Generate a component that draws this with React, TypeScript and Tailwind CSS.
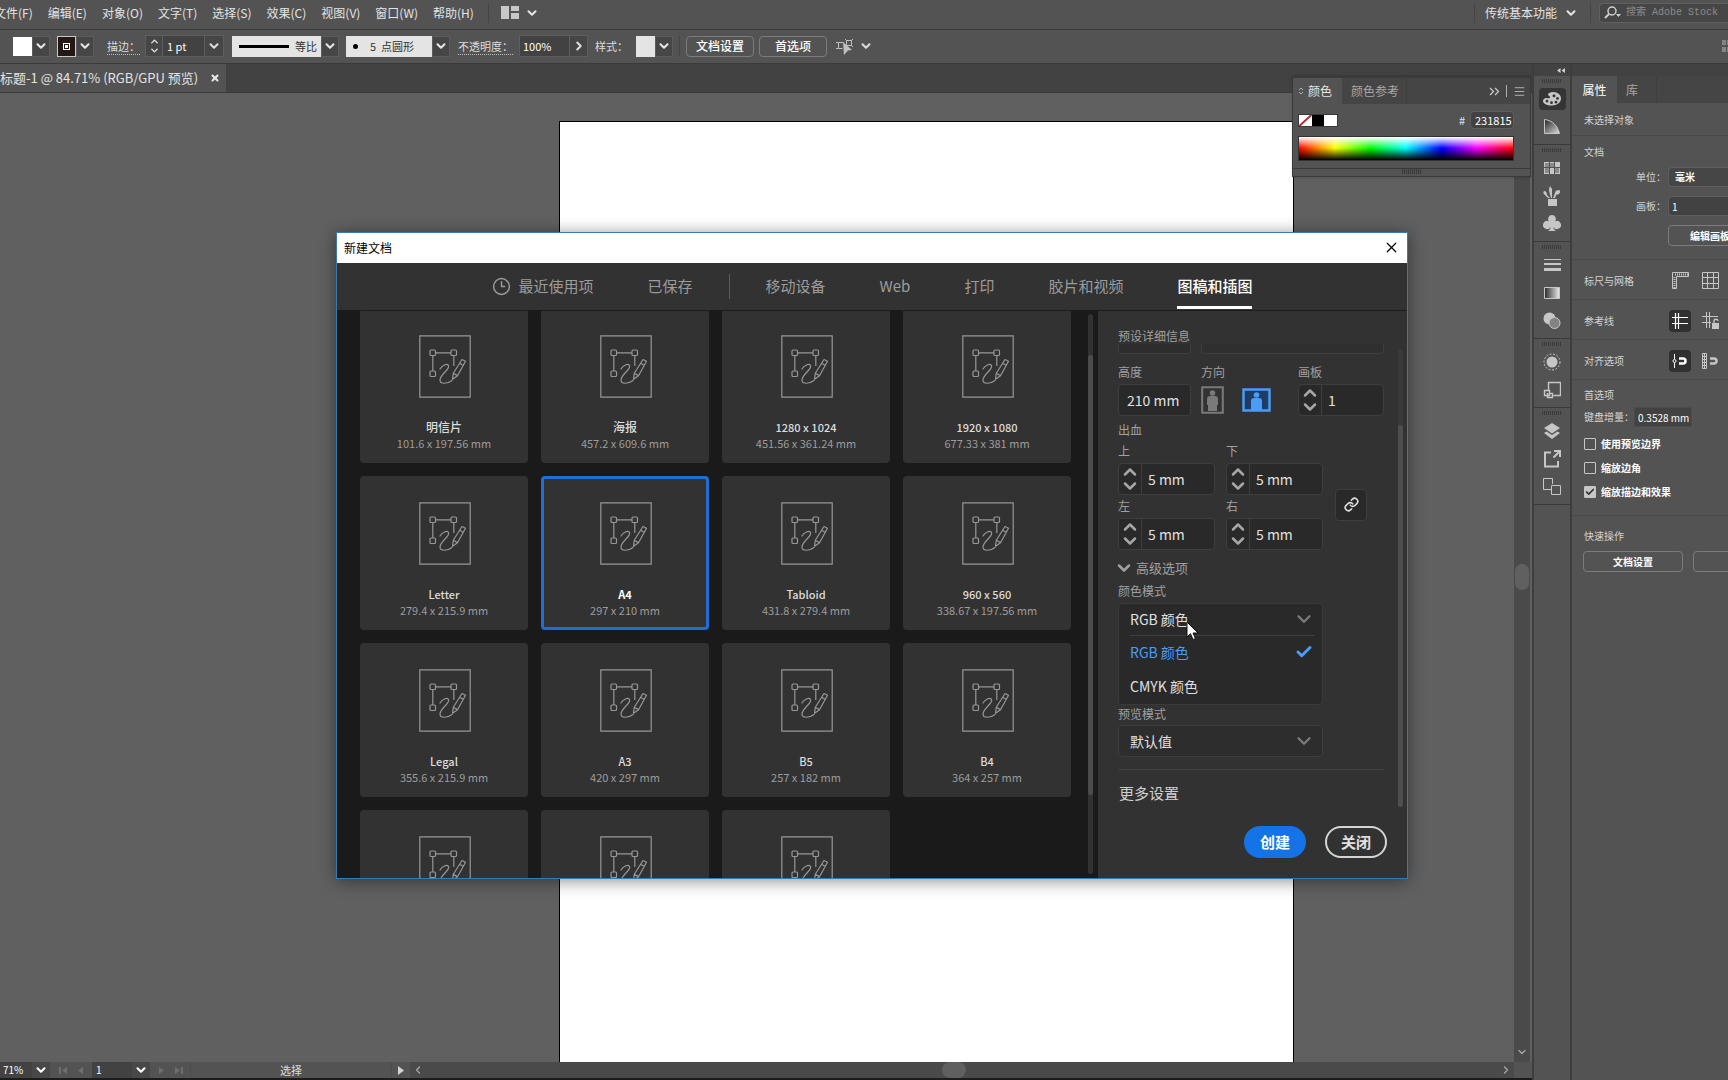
import { ReactNode, useState } from 'react';
import { Check, ChevronDown, ChevronLeft, ChevronRight, ChevronUp, Clock3, Link, Menu, X } from 'lucide-react';

const MENUS = ['文件(F)', '编辑(E)', '对象(O)', '文字(T)', '选择(S)', '效果(C)', '视图(V)', '窗口(W)', '帮助(H)'];

const PRESETS = [
  { id: 'postcard', name: '明信片', size: '101.6 x 197.56 mm' },
  { id: 'poster', name: '海报', size: '457.2 x 609.6 mm' },
  { id: '1280', name: '1280 x 1024', size: '451.56 x 361.24 mm' },
  { id: '1920', name: '1920 x 1080', size: '677.33 x 381 mm' },
  { id: 'letter', name: 'Letter', size: '279.4 x 215.9 mm' },
  { id: 'a4', name: 'A4', size: '297 x 210 mm' },
  { id: 'tabloid', name: 'Tabloid', size: '431.8 x 279.4 mm' },
  { id: '960', name: '960 x 560', size: '338.67 x 197.56 mm' },
  { id: 'legal', name: 'Legal', size: '355.6 x 215.9 mm' },
  { id: 'a3', name: 'A3', size: '420 x 297 mm' },
  { id: 'b5', name: 'B5', size: '257 x 182 mm' },
  { id: 'b4', name: 'B4', size: '364 x 257 mm' },
  { id: 'custom1' },
  { id: 'custom2' },
  { id: 'custom3' },
];

const Caret = () => <ChevronDown size={14} strokeWidth={3.5} />;

function DropButton({ label }: { label: string }) {
  return (
    <button aria-label={label} className="w-[18px] h-[21px] shrink-0 flex items-center justify-center bg-[#464646] border border-[#5c5c5c] text-[#e6e6e6]">
      <Caret />
    </button>
  );
}

function Divider() {
  return <span className="block w-px h-5 bg-[#454545] shrink-0" />;
}

/* ---------- top bars ---------- */

function MenuBar() {
  return (
    <header className="h-[30px] shrink-0 flex items-center bg-[#535353] border-b border-[#3a3a3a] text-xs text-[#e4e4e4] overflow-hidden">
      <nav className="flex items-center gap-[15px] -ml-[6px] pb-1 whitespace-nowrap">
        {MENUS.map(m => <button key={m}>{m}</button>)}
      </nav>
      <div className="flex items-center gap-2 pb-1 ml-[14px]">
        <Divider />
        <button aria-label="排列文档" className="flex items-center gap-[6px] ml-1">
          <svg width="18" height="13" viewBox="0 0 18 13" fill="#c8c8c8">
            <path d="M0 0h8v13H0zM10 0h8v5h-8zM10 7h8v6h-8z" />
          </svg>
          <Caret />
        </button>
      </div>
      <div className="ml-auto flex items-center pb-1">
        <Divider />
        <button className="flex items-center gap-[7px] ml-[10px] mr-3">
          传统基本功能 <Caret />
        </button>
        <Divider />
        <label className="ml-2 w-[129px] h-5 flex items-center gap-1 pl-1 bg-[#464646] border border-[#606060] border-r-0 rounded-l-sm">
          <svg className="shrink-0" width="18" height="13" viewBox="0 0 18 13" fill="none" stroke="#d0d0d0" strokeWidth="1.5">
            <circle cx="8" cy="5" r="4" />
            <path d="M5 8 1 12" strokeWidth="2" />
            <path d="m12 8 5 0-2.500 3z" fill="#d0d0d0" stroke="none" />
          </svg>
          <input
            aria-label="搜索 Adobe Stock"
            placeholder="搜索 Adobe Stock"
            className="w-full min-w-0 bg-transparent outline-none text-[10px] placeholder:text-[#8c8c8c] font-['Liberation_Mono','Noto_Sans_CJK_SC',monospace]"
          />
        </label>
      </div>
    </header>
  );
}

function OptionsBar() {
  return (
    <div className="h-[34px] shrink-0 flex items-center bg-[#535353] border-b border-[#3a3a3a] text-[11px] text-[#dcdcdc] whitespace-nowrap pl-[13px] pb-px">
      <button aria-label="填色" className="w-[19px] h-[19px] bg-white" />
      <DropButton label="填色选项" />
      <button aria-label="描边颜色" className="ml-[7px] w-[19px] h-[21px] bg-[#231815] border border-[#c8c8c8] flex items-center justify-center">
        <span className="w-[7px] h-[7px] border border-white flex items-center justify-center">
          <span className="w-[3px] h-[3px] bg-white" />
        </span>
      </button>
      <DropButton label="描边选项" />
      <label htmlFor="stroke" className="ml-[13px] border-b border-dotted border-[#c0c0c0] leading-4">描边：</label>
      <div className="ml-[5px] flex h-[22px] border border-[#5e5e5e] bg-[#464646]">
        <span className="w-4 flex flex-col items-center justify-center text-[#e6e6e6]">
          <ChevronUp size={13} strokeWidth={3} className="-mb-[2px]" />
          <ChevronDown size={13} strokeWidth={3} />
        </span>
        <input id="stroke" defaultValue="1 pt" className="w-[42px] pl-1 border-l border-[#5e5e5e] bg-[#424242] text-white outline-none" />
        <button aria-label="描边粗细" className="w-[19px] flex items-center justify-center border-l border-[#5e5e5e]"><Caret /></button>
      </div>
      <button className="ml-2 w-[89px] h-[21px] flex items-center justify-end gap-[6px] pr-1 bg-[#e4e4e4] text-[#333]">
        <span className="w-[50px] h-[3px] bg-black" />等比
      </button>
      <DropButton label="变量宽度" />
      <button className="ml-[7px] w-[86px] h-[21px] flex items-center gap-3 pl-[7px] bg-[#e4e4e4] text-[#333]">
        <span className="w-[5px] h-[5px] rounded-full bg-black" />5&nbsp; 点圆形
      </button>
      <DropButton label="画笔定义" />
      <label htmlFor="opacity" className="ml-2 border-b border-dotted border-[#c0c0c0] leading-4">不透明度：</label>
      <div className="ml-[6px] flex h-[22px] border border-[#5e5e5e] bg-[#464646]">
        <input id="opacity" defaultValue="100%" className="w-[49px] pl-[3px] bg-[#424242] text-white outline-none" />
        <button aria-label="不透明度选项" className="w-[18px] flex items-center justify-center border-l border-[#5e5e5e]">
          <ChevronRight size={14} strokeWidth={3.5} />
        </button>
      </div>
      <span className="ml-[7px]">样式：</span>
      <button aria-label="图形样式" className="ml-2 w-[19px] h-[21px] bg-[#e4e4e4]" />
      <DropButton label="样式选项" />
      <span className="mx-[6px]"><Divider /></span>
      <button className="w-[68px] h-[21px] rounded-sm border border-[#7c7c7c] text-xs font-medium text-white">文档设置</button>
      <button className="ml-[5px] w-[68px] h-[21px] rounded-sm border border-[#7c7c7c] text-xs font-medium text-white">首选项</button>
      <button aria-label="选择类似的对象" className="ml-[9px] flex items-center gap-[5px]">
        <svg width="18" height="18" viewBox="0 0 18 18" fill="none" stroke="#c0c0c0">
          <path d="M7.500 5.500H2.500v6h4M0 5.500h2M0 11.500h2M10.500 3.500h5v5h-5zM9 2l2 2M17 2l-2 2M17 10l-2-2" />
          <path d="m7 5 9 8-4 .5L8 18z" fill="#c0c0c0" stroke="none" />
        </svg>
        <Caret />
      </button>
      <svg className="ml-auto" width="6" height="14" viewBox="0 0 6 14" fill="#858585">
        <path d="M0 1h4v5H0zM5 1h1v5H5zM0 8h4v5H0zM5 8h1v5H5z" />
      </svg>
    </div>
  );
}

/* ---------- workspace ---------- */

function ColorPanel() {
  return (
    <section className="absolute right-px top-[11px] w-[239px] bg-[#535353] border-t-[3px] border-x border-[#3a3a3a] text-xs text-[#e6e6e6] shadow">
      <div className="h-[26px] flex items-stretch bg-[#454545]">
        <button className="w-[49px] flex items-center gap-1 pl-[5px] bg-[#535353]">
          <svg width="6" height="10" viewBox="0 0 6 10" fill="none" stroke="#b0b0b0"><path d="m1 4 2-2 2 2M1 6l2 2 2-2" /></svg>
          颜色
        </button>
        <button className="w-[65px] pl-[9px] text-left text-[#a8a8a8] border-r border-[#3f3f3f]">颜色参考</button>
        <div className="ml-auto mr-1 flex items-center gap-[6px] text-[#c8c8c8]">
          <svg width="11" height="9" viewBox="0 0 11 9" fill="none" stroke="currentColor" strokeWidth="1.300"><path d="m1 1 3.500 3.500L1 8M6 1l3.500 3.500L6 8" /></svg>
          <span className="w-px h-3 bg-[#b0b0b0]" />
          <Menu size={13} strokeWidth={1.5} />
        </div>
      </div>
      <div className="flex items-center py-[7px] px-[5px]">
        <span className="flex w-10 h-[13px] border border-[#3a3a3a]">
          <svg className="flex-1 bg-white" viewBox="0 0 13 12" stroke="#b3262a" strokeWidth="2"><path d="M0 12 13 0" /></svg>
          <span className="flex-1 bg-black" />
          <span className="flex-1 bg-white" />
        </span>
        <label className="ml-auto mr-[11px] flex items-center gap-[5px] text-[11px]">
          #
          <input defaultValue="231815" className="w-11 h-[18px] pl-1 bg-[#424242] border border-[#5e5e5e] rounded-sm text-white text-[11px] outline-none" />
        </label>
      </div>
      <div className="ml-[5px] mr-4 h-[25px] border border-[#333] bg-[linear-gradient(to_bottom,#ffffff_0%,transparent_48%,#000000_100%),linear-gradient(to_right,#f00,#ff0,#0f0,#0ff,#00f,#f0f,#f00)]" />
      <div className="mt-[7px] h-[9px] flex justify-center border-y border-[#3a3a3a]">
        <span className="w-5 h-[5px] bg-[repeating-linear-gradient(to_right,#3a3a3a_0px,#3a3a3a_1px,transparent_1px,transparent_2px)]" />
      </div>
    </section>
  );
}

function StatusBar() {
  return (
    <footer className="h-[18px] shrink-0 flex items-stretch bg-[#535353] border-b-2 border-[#1c1c1c] text-[10px] leading-4 text-white">
      <input aria-label="缩放" defaultValue="71%" className="w-8 pl-[3px] bg-[#424242] outline-none" />
      <button aria-label="缩放级别" className="w-[18px] flex items-center justify-center bg-[#484848]"><Caret /></button>
      <div className="w-[42px] flex items-center justify-center gap-[10px]">
        <svg width="9" height="9" viewBox="0 0 9 9" fill="#6e6e6e"><path d="M0 1h2v7H0zM8 1v7L3 4.500z" /></svg>
        <svg width="6" height="9" viewBox="0 0 6 9" fill="#6e6e6e"><path d="M5 1v7L0 4.500z" /></svg>
      </div>
      <input aria-label="画板导航" defaultValue="1" className="w-10 pl-1 bg-[#424242] outline-none" />
      <button aria-label="画板列表" className="w-[18px] flex items-center justify-center bg-[#484848]"><Caret /></button>
      <div className="w-10 flex items-center justify-center gap-[10px]">
        <svg width="6" height="9" viewBox="0 0 6 9" fill="#6e6e6e"><path d="M1 1v7l5-3.500z" /></svg>
        <svg width="9" height="9" viewBox="0 0 9 9" fill="#6e6e6e"><path d="M7 1h2v7H7zM1 1v7l5-3.500z" /></svg>
      </div>
      <span className="w-[202px] text-center text-[#dcdcdc] text-[11px] border-x border-[#4c4c4c]">选择</span>
      <button aria-label="状态选项" className="w-[18px] flex items-center justify-center">
        <svg width="6" height="9" viewBox="0 0 6 9" fill="#d4d4d4"><path d="M0 0v9l6-4.500z" /></svg>
      </button>
      <div className="flex-1 flex items-center justify-between bg-[#4a4a4a] text-[#a8a8a8] px-[2px]">
        <ChevronLeft size={12} strokeWidth={2.5} />
        <span className="w-6 h-4 rounded-full bg-[#606060] mr-4" />
        <ChevronRight size={12} strokeWidth={2.5} />
      </div>
      <span className="w-[18px]" />
    </footer>
  );
}

function Workspace() {
  return (
    <main className="relative flex-1 min-w-0 flex flex-col">
      <div className="h-[29px] shrink-0 flex bg-[#424242] border-b border-[#3a3a3a]">
        <div className="w-[226px] flex items-center justify-between pr-1 bg-[#535353] text-[13px] text-[#e4e4e4] whitespace-nowrap">
          标题-1 @ 84.71% (RGB/GPU 预览)
          <button aria-label="关闭文档" className="px-[2px]"><X size={10} strokeWidth={5} /></button>
        </div>
      </div>
      <div className="flex-1 min-h-0 flex bg-[#606060]">
        <div className="relative flex-1 overflow-hidden">
          <div className="absolute left-[559px] top-7 -bottom-px w-[735px] bg-white border border-black" />
        </div>
        <div className="w-4 mr-[2px] flex flex-col items-center justify-end bg-[#4a4a4a] text-[#a8a8a8]">
          <span className="w-[14px] h-[26px] rounded-full bg-[#606060]" />
          <span className="h-[456px]" />
          <ChevronDown size={12} strokeWidth={2.5} className="mb-1" />
        </div>
      </div>
      <StatusBar />
      <ColorPanel />
    </main>
  );
}

/* ---------- icon dock ---------- */

function DockIcon({ label, active, children }: { label: string; active?: boolean; children: ReactNode }) {
  return (
    <button
      aria-label={label}
      className={active
        ? 'w-[27px] h-[22px] my-[3px] flex items-center justify-center bg-[#353535] rounded-sm'
        : 'w-[27px] h-[28px] flex items-center justify-center'}
    >
      <svg width="18" height="20" viewBox="0 0 18 20" fill="#c6c6c6">{children}</svg>
    </button>
  );
}

function DockGroup({ children }: { children: ReactNode }) {
  return (
    <div className="flex flex-col items-center pb-[3px] border-b border-[#3a3a3a]">
      <span className="w-5 h-1 mt-[3px] mb-[2px] bg-[repeating-linear-gradient(to_right,#3a3a3a_0px,#3a3a3a_1px,transparent_1px,transparent_2px)]" />
      {children}
    </div>
  );
}

function Dock() {
  return (
    <aside className="w-10 shrink-0 flex flex-col bg-[#535353] border-x-2 border-[#3e3e3e]">
      <div className="h-3 shrink-0 flex items-center justify-end pr-[5px] bg-[#424242]">
        <svg width="8" height="5" viewBox="0 0 8 5" fill="#d0d0d0"><path d="M3.500 0v5L0 2.500zM8 0v5L4.500 2.500z" /></svg>
      </div>
      <DockGroup>
        <DockIcon label="颜色" active>
          <path fillRule="evenodd" d="M10 3c5 0 8 3 8 6.500 0 4-4 7-9 7-5.500 0-9-2-9-4.500 0-2 2-3.500 4-3 2 .5 3 .5 3-1S5 7 5 5.500 7.500 3 10 3zm1 2.200a1.500 1.500 0 1 0 0 3 1.500 1.500 0 0 0 0-3zM14.500 8a1.400 1.400 0 1 0 0 2.800 1.400 1.400 0 0 0 0-2.800zM13 11.800a1.400 1.400 0 1 0 0 2.800 1.400 1.400 0 0 0 0-2.800zm-4.500.5a1.400 1.400 0 1 0 0 2.800 1.400 1.400 0 0 0 0-2.800zM4 10.800a1.400 1.400 0 1 0 0 2.800 1.400 1.400 0 0 0 0-2.800z" />
        </DockIcon>
        <DockIcon label="颜色参考">
          <defs>
            <linearGradient id="guide" x1="0" y1="0" x2="1" y2="1"><stop offset="0" stopColor="#222" /><stop offset="1" stopColor="#ddd" /></linearGradient>
          </defs>
          <path d="M1.500 2.500c8 1 13 6 15 14h-15z" fill="url(#guide)" stroke="#c6c6c6" />
        </DockIcon>
      </DockGroup>
      <DockGroup>
        <DockIcon label="色板">
          <path d="M1 4h16v12H1z" />
          <path d="M2 5h4v4H2zM7 5h4v4H7zM2 10h4v5H2zM12 10h4v5h-4z" fill="#8a8a8a" />
          <path d="M1 9.500h16M6.500 4v12M11.500 4v12" stroke="#535353" />
        </DockIcon>
        <DockIcon label="画笔">
          <path d="M5 13h9v7H5zM8 12C7 8 6 6 6 3l1-3 2 3v9zM5 12 2 9C0 8 0 6 1 5c2 0 3 2 3 4l3 3zM10 12l2-5c0-2 2-3 4-3 2 1 1 3 0 4l-3 1-1 3z" />
        </DockIcon>
        <DockIcon label="符号">
          <path d="M9 1a4 4 0 0 1 3 6.500A4 4 0 1 1 10.500 13c0 2 1 3 2.500 4H5c1.500-1 2.500-2 2.500-4A4 4 0 1 1 6 7.500 4 4 0 0 1 9 1z" />
        </DockIcon>
      </DockGroup>
      <DockGroup>
        <DockIcon label="描边"><path d="M1 4h17v1H1zM1 8h17v2H1zM1 13h17v3H1z" /></DockIcon>
        <DockIcon label="渐变">
          <defs><linearGradient id="grad"><stop offset="0" stopColor="#2a2a2a" /><stop offset="1" stopColor="#eee" /></linearGradient></defs>
          <path d="M1.500 4.500h15v11h-15z" fill="url(#grad)" stroke="#c6c6c6" />
        </DockIcon>
        <DockIcon label="透明度">
          <circle cx="6.500" cy="7.500" r="6" />
          <circle cx="11.500" cy="12" r="5.500" fill="#828282" stroke="#c6c6c6" />
        </DockIcon>
      </DockGroup>
      <DockGroup>
        <DockIcon label="外观">
          <circle cx="9" cy="10" r="5.500" />
          <circle cx="9" cy="10" r="8" fill="none" stroke="#c6c6c6" strokeDasharray="2 1.500" />
        </DockIcon>
        <DockIcon label="图形样式">
          <path d="M5.500 10V2.500h12v13h-7M1.500 10.500h5v5h-5zM4.500 13v4.500h5v-4H7" fill="none" stroke="#c6c6c6" strokeWidth="1.400" />
        </DockIcon>
      </DockGroup>
      <DockGroup>
        <DockIcon label="图层">
          <path d="m9 2 8 5-8 5.500L1 7z" />
          <path d="m1 12 2.500-1.500L9 14l5.500-3.500L17 12l-8 6z" />
        </DockIcon>
        <DockIcon label="资源导出">
          <path d="M8 3.500H2v14h13V12M17 8V2h-6M17 2l-6.500 6.500" fill="none" stroke="#c6c6c6" strokeWidth="2" />
        </DockIcon>
        <DockIcon label="画板">
          <path d="M8 12.500H.5V1.500h9V7M8.500 8.500h9v9h-9z" fill="none" stroke="#c6c6c6" />
        </DockIcon>
      </DockGroup>
    </aside>
  );
}

/* ---------- properties panel ---------- */

function IconRow({ title, children }: { title: string; children: ReactNode }) {
  return (
    <div className="h-10 flex items-center pl-3 pt-[2px] border-b border-[#4a4a4a]">
      <span className="w-[85px]">{title}</span>
      {children}
    </div>
  );
}

function Properties() {
  return (
    <aside className="w-[156px] shrink-0 bg-[#535353] text-[10px] leading-4 text-[#d4d4d4] whitespace-nowrap overflow-hidden">
      <div className="h-3 bg-[#424242]" />
      <div className="h-[27px] flex bg-[#454545] text-xs">
        <button className="w-[45px] bg-[#535353] text-white">属性</button>
        <button className="w-10 pl-[9px] text-left text-[#a8a8a8] border-r border-[#3f3f3f]">库</button>
      </div>
      <p className="h-[33px] pl-3 pt-[9px] border-b border-[#4a4a4a]">未选择对象</p>
      <div className="h-[124px] pt-2 pl-3 border-b border-[#4a4a4a]">
        <p>文档</p>
        <label className="mt-[7px] flex items-center justify-end">
          单位：
          <select defaultValue="毫米" className="ml-[2px] w-[60px] h-5 pl-[6px] appearance-none bg-[#464646] border border-[#5e5e5e] border-r-0 rounded-l-sm text-white font-bold">
            <option>毫米</option>
          </select>
        </label>
        <label className="mt-[9px] flex items-center justify-end">
          画板：
          <input defaultValue="1" className="ml-[2px] w-[60px] h-5 pl-[3px] bg-[#424242] border border-[#5e5e5e] border-r-0 rounded-l-sm text-white outline-none" />
        </label>
        <button className="mt-[9px] ml-[84px] w-[90px] h-[21px] pl-[21px] text-left border border-[#7c7c7c] rounded-sm text-white font-bold">编辑画板</button>
      </div>
      <IconRow title="标尺与网格">
        <button aria-label="标尺" className="mx-[3px]">
          <svg width="17" height="17" viewBox="0 0 17 17" fill="none" stroke="#c6c6c6">
            <path d="M.5.5h16v4h-12v12h-4z" /><path d="M3 2.500h13M2.500 5v11" strokeDasharray="1 1" strokeWidth="2" />
          </svg>
        </button>
        <button aria-label="网格" className="ml-[10px]">
          <svg width="17" height="17" viewBox="0 0 17 17" fill="none" stroke="#c6c6c6"><path d="M.5.5h16v16H.5zM5.500 0v17M11.500 0v17M0 5.500h17M0 11.500h17" /></svg>
        </button>
      </IconRow>
      <IconRow title="参考线">
        <button aria-label="显示参考线" className="w-[22px] h-[22px] flex items-center justify-center rounded-sm bg-[#303030]">
          <svg width="16" height="16" viewBox="0 0 16 16" fill="none" stroke="#fff"><path d="M3.500 0v16M6.500 0v16M0 4.500h16M0 10.500h16" strokeWidth="1.200" /></svg>
        </button>
        <button aria-label="锁定参考线" className="ml-[11px]">
          <svg width="18" height="17" viewBox="0 0 18 17" fill="none" stroke="#c6c6c6">
            <path d="M4.500 0v16M7.500 0v16M0 4.500h16M0 10.500h9" />
            <path d="M10 11h7v6h-7z" fill="#c6c6c6" stroke="none" /><path d="M12 11V9.500a2 2 0 0 1 4-.5" strokeWidth="1.300" />
          </svg>
        </button>
      </IconRow>
      <IconRow title="对齐选项">
        <button aria-label="对齐点" className="w-[22px] h-[22px] flex items-center justify-center rounded-sm bg-[#303030]">
          <svg width="16" height="14" viewBox="0 0 16 14" fill="none" stroke="#fff">
            <path d="M2.500 0v5M2.500 9v5" /><circle cx="2.500" cy="7" r="1.500" /><path d="M7 4.500h4a2.500 2.500 0 0 1 0 5H7" strokeWidth="2.500" />
          </svg>
        </button>
        <button aria-label="对齐网格" className="ml-[11px]">
          <svg width="16" height="16" viewBox="0 0 16 16" fill="none" stroke="#c6c6c6">
            <path d="M.5.5h4v15h-4zM2.500 0v16M0 3.500h5M0 6.500h5M0 9.500h5M0 12.500h5" /><path d="M8 5.500h4a2.500 2.500 0 0 1 0 5H8" strokeWidth="2.500" />
          </svg>
        </button>
      </IconRow>
      <div className="h-[136px] pt-[7px] pl-3 border-b border-[#4a4a4a]">
        <p>首选项</p>
        <label className="mt-1 mb-1 flex items-center">
          键盘增量：
          <input defaultValue="0.3528 mm" className="w-[58px] h-5 pl-[3px] bg-[#424242] border border-[#4c4c4c] text-white outline-none" />
        </label>
        {['使用预览边界', '缩放边角', '缩放描边和效果'].map((label, i) => (
          <label key={label} className="relative h-6 flex items-center gap-[5px] pt-[2px] text-white font-bold">
            <input type="checkbox" defaultChecked={i === 2} className="peer sr-only" />
            <span className="w-3 h-3 flex items-center justify-center border border-[#c6c6c6] rounded-[1px] text-transparent peer-checked:bg-[#c6c6c6] peer-checked:text-[#333]">
              <Check size={10} strokeWidth={4} />
            </span>
            {label}
          </label>
        ))}
      </div>
      <div className="pt-3 pl-[11px]">
        <p className="pl-px">快速操作</p>
        <div className="mt-[7px] flex gap-[10px]">
          <button className="w-[100px] h-[21px] shrink-0 border border-[#7c7c7c] rounded-sm text-white font-bold">文档设置</button>
          <button aria-label="首选项" className="w-[100px] h-[21px] shrink-0 border border-[#7c7c7c] rounded-sm" />
        </div>
      </div>
    </aside>
  );
}

/* ---------- new document dialog ---------- */

function PresetIcon() {
  return (
    <svg width="54" height="63" viewBox="-2 0 54 63" fill="none" stroke="#979797" strokeWidth="1.200">
      <path d="M.8.8h50.400v61.400H.8z" />
      <rect x="11" y="15" width="5.500" height="5.500" rx="1" />
      <rect x="32" y="15" width="5.500" height="5.500" rx="1" />
      <rect x="11" y="36" width="5.500" height="5.500" rx="1" />
      <path d="M16.500 17.800H32M13.800 20.500V36M34.800 20.500V31" />
      <path d="M21 34c2-3.500 7-6 8.500-3.500 2 3.500-8.500 9-8.500 14.500 0 4.500 7.500 4 12 .5" strokeLinecap="round" />
      <path d="m43 24.500 3.500 1.800-8 14.500-5 3.500.8-6zM34.300 38.300l4.200 2.300M41 28.500l3.500 2" strokeLinejoin="round" />
    </svg>
  );
}

function Stepper({ label, value, wide }: { label: string; value: string; wide?: boolean }) {
  return (
    <div className={wide ? 'w-[86px]' : 'w-[97px]'}>
      <label htmlFor={`f-${label}`} className="block h-[21px] leading-[18px] text-xs text-[#a0a0a0]">{label}</label>
      <div className="h-8 flex bg-[#292929] border border-[#3e3e3e] rounded-sm">
        <div className="w-[22px] shrink-0 flex flex-col items-center justify-center text-[#a6a6a6]">
          <button aria-label={`增加${label}`} className="h-[14px] flex items-center"><ChevronUp size={20} strokeWidth={3} /></button>
          <button aria-label={`减少${label}`} className="h-[14px] flex items-center"><ChevronDown size={20} strokeWidth={3} /></button>
        </div>
        <input id={`f-${label}`} defaultValue={value} className="w-full min-w-0 pl-[6px] border-l border-[#3e3e3e] bg-transparent text-sm text-[#e0e0e0] outline-none" />
      </div>
    </div>
  );
}

function PresetList() {
  const [selected, setSelected] = useState('a4');
  return (
    <div className="flex-1 min-w-0 flex bg-[#1a1a1a] pl-[23px] pr-[5px]">
      <div className="flex-1 h-full overflow-hidden">
        <div className="-mt-[2px] grid grid-cols-4 gap-[13px] auto-rows-[154px]">
          {PRESETS.map(p => (
            <button
              key={p.id}
              aria-label={p.name ?? '自定义'}
              onClick={() => setSelected(p.id)}
              className={`flex flex-col items-center pt-[23px] rounded border-[3px] bg-[#323232] ${selected === p.id ? 'border-[#216fd6] text-white' : 'border-[#323232] text-[#dcdcdc]'}`}
            >
              <PresetIcon />
              {p.name && (
                <>
                  <span className={`mt-[21px] h-4 leading-4 ${/^\w/.test(p.name) ? 'text-[11px]' : 'text-xs'} ${selected === p.id ? 'font-bold' : 'font-medium'}`}>{p.name}</span>
                  <span className="h-4 leading-4 text-[11px] text-[#9c9c9c] whitespace-nowrap">{p.size}</span>
                </>
              )}
            </button>
          ))}
        </div>
      </div>
      <div className="w-[5px] ml-[17px] mt-[3px] mb-1 rounded-full bg-[#323232] pt-[41px]">
        <div className="h-[440px] rounded-full bg-[#4b4b4b]" />
      </div>
    </div>
  );
}

function PersonIcon({ landscape }: { landscape?: boolean }) {
  return landscape ? (
    <svg width="29" height="24" viewBox="0 0 29 24" fill="#4b9cf5">
      <path d="M1.500 1.500h26v21h-26z" fill="#1d3d66" stroke="#4b9cf5" strokeWidth="2.500" />
      <circle cx="14.500" cy="7" r="2.800" />
      <path d="M9 22v-9c0-2 1-3 3-3h5c2 0 3 1 3 3v9z" />
    </svg>
  ) : (
    <svg width="23" height="28" viewBox="0 0 23 28" fill="#7a7a7a">
      <path d="M1.200 1.200h20.600v25.600H1.200z" fill="none" stroke="#7a7a7a" strokeWidth="2" />
      <circle cx="11.500" cy="7" r="2.800" />
      <path d="M6 19v-6c0-2 1-3 3-3h5c2 0 3 1 3 3v6h-1v6H7v-6z" />
    </svg>
  );
}

function PresetDetails() {
  return (
    <div className="w-[309px] shrink-0 flex bg-[#323232]">
      <div className="flex-1 flex flex-col pl-5 pt-4 text-xs text-[#a0a0a0]">
        <div className="pr-[14px]">
          <h2 className="h-[17px] leading-[18px]">预设详细信息</h2>
          <div className="flex gap-[10px]">
            <span className="w-[73px] h-[10px] bg-[#2d2d2d] border border-t-0 border-[#3e3e3e] rounded-b-sm" />
            <span className="flex-1 h-[10px] bg-[#2f2f2f] border border-t-0 border-[#3e3e3e] rounded-b-sm" />
          </div>

          <div className="mt-[9px] flex">
            <div className="w-[73px]">
              <label htmlFor="height" className="block h-[21px] leading-[18px]">高度</label>
              <input id="height" defaultValue="210 mm" className="w-full h-8 pl-2 bg-[#292929] border border-[#3e3e3e] rounded-sm text-sm text-[#e0e0e0] outline-none" />
            </div>
            <div className="ml-[10px] w-[97px]">
              <p className="h-[21px] leading-[18px]">方向</p>
              <div className="h-8 flex items-center gap-[18px]">
                <button aria-label="纵向"><PersonIcon /></button>
                <button aria-label="横向"><PersonIcon landscape /></button>
              </div>
            </div>
            <Stepper label="画板" value="1" wide />
          </div>

          <p className="mt-[5px] h-5 leading-[18px]">出血</p>
          <div className="flex items-center">
            <div className="mt-px grid grid-cols-2 gap-x-[11px] gap-y-[2px]">
              <Stepper label="上" value="5 mm" />
              <Stepper label="下" value="5 mm" />
              <Stepper label="左" value="5 mm" />
              <Stepper label="右" value="5 mm" />
            </div>
            <button aria-label="链接出血" className="mt-[18px] ml-3 w-8 h-8 flex items-center justify-center bg-[#292929] border border-[#3e3e3e] rounded-sm text-[#e0e0e0]">
              <Link size={15} strokeWidth={2.5} />
            </button>
          </div>

          <button className="mt-2 mb-px flex items-center text-[13px] leading-5">
            <ChevronDown size={20} strokeWidth={3} className="-ml-1 mr-[2px]" /> 高级选项
          </button>
          <p className="mt-1 h-[21px] leading-[18px]">颜色模式</p>
          <div className="w-[205px] h-[102px] pl-[11px] pr-[7px] bg-[#292929] border border-[#3a3a3a] rounded-sm text-sm text-[#e0e0e0]">
            <button aria-haspopup="listbox" aria-expanded="true" className="w-full h-8 pb-[2px] flex items-center justify-between border-b border-[#3e3e3e]">
              RGB 颜色 <ChevronDown size={22} strokeWidth={2.5} className="text-[#7c7c7c]" />
            </button>
            <ul role="listbox" aria-label="颜色模式">
              <li role="option" aria-selected="true" className="h-[33px] pb-[2px] pr-[2px] flex items-center justify-between text-[#4b9cf5]">
                RGB 颜色 <Check size={18} strokeWidth={4} />
              </li>
              <li role="option" aria-selected="false" className="h-[34px] flex items-center">CMYK 颜色</li>
            </ul>
          </div>
          <label htmlFor="preview" className="block h-5 leading-[18px]">预览模式</label>
          <div className="w-[205px] h-8 flex items-center pr-[7px] bg-[#2d2d2d] border border-[#3e3e3e] rounded-sm">
            <select id="preview" className="flex-1 h-full pl-[11px] appearance-none bg-transparent text-sm text-[#e0e0e0] outline-none">
              <option>默认值</option>
            </select>
            <ChevronDown size={22} strokeWidth={2.5} className="text-[#7c7c7c]" />
          </div>
          <hr className="mt-3 border-[#404040]" />
          <button className="mt-[13px] ml-px text-[15px] leading-5 text-[#d0d0d0]">更多设置</button>
        </div>
        <div className="mt-auto mb-5 flex justify-end gap-[19px] pr-[11px] text-[15px] font-bold">
          <button className="w-[62px] h-8 rounded-full bg-[#1473e6] text-white">创建</button>
          <button className="w-[62px] h-8 rounded-full border-2 border-[#d4d4d4] text-[#e0e0e0]">关闭</button>
        </div>
      </div>
      <div className="w-[5px] mr-1 mt-[38px] mb-[71px] rounded-full bg-[#3a3a3a] pt-[76px]">
        <div className="h-full rounded-full bg-[#4e4e4e]" />
      </div>
    </div>
  );
}

function NewDocumentDialog() {
  const tab = 'h-full flex items-center gap-2';
  return (
    <div role="dialog" aria-label="新建文档" className="absolute left-[336px] top-[232px] w-[1072px] h-[647px] flex flex-col border border-[#3b78ab] bg-[#323232] shadow-[0_2px_16px_rgba(0,0,0,0.45)]">
      <div className="h-[30px] shrink-0 flex items-center justify-between pl-[7px] pr-[7px] pb-px bg-white text-xs text-black">
        新建文档
        <button aria-label="关闭对话框"><X size={17} strokeWidth={1.7} /></button>
      </div>
      <nav className="h-12 shrink-0 flex items-center justify-center gap-[54px] border-b border-[#1c1c1c] text-[15px] text-[#9c9c9c] whitespace-nowrap">
        <button className={tab}><Clock3 size={19} strokeWidth={1.8} />最近使用项</button>
        <div className="h-full flex items-center gap-9">
          <button className={tab}>已保存</button>
          <span className="w-px h-[25px] bg-[#5a5a5a]" />
          <button className={tab}>移动设备</button>
        </div>
        <button className={tab}>Web</button>
        <button className={tab}>打印</button>
        <button className={tab}>胶片和视频</button>
        <button className="h-[46px] self-start pt-[3px] border-b-[3px] border-white font-medium text-white">图稿和插图</button>
      </nav>
      <div className="flex-1 min-h-0 flex">
        <PresetList />
        <PresetDetails />
      </div>
    </div>
  );
}

export default function App() {
  return (
    <div className="relative h-screen flex flex-col overflow-hidden bg-[#535353] font-['Noto_Sans_CJK_SC','Liberation_Sans',sans-serif]">
      <MenuBar />
      <OptionsBar />
      <div className="flex-1 min-h-0 flex">
        <Workspace />
        <Dock />
        <Properties />
      </div>
      <NewDocumentDialog />
      {/* mouse pointer */}
      <svg className="absolute left-[1186px] top-[621px]" width="13" height="20" viewBox="0 0 13 20">
        <path d="M1 1v15l3.500-3.300L7 18.500l2.500-1L7 12h5z" fill="#fff" stroke="#111" />
      </svg>
    </div>
  );
}
